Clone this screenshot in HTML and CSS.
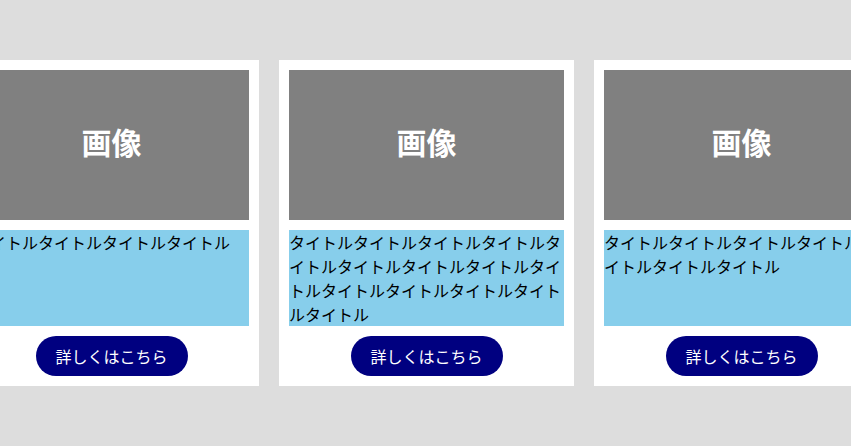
FILE: index.html
```html
<!DOCTYPE html>
<html lang="ja">
<head>
    <meta charset="UTF-8">
    <title>カード一覧</title>
    <link rel="stylesheet" href="styles.css">
</head>
<body>
    <div class="slider">
        <div class="slider-track">
            <div class="card">
                <div class="card-img">画像</div>
                <p class="card-title">タイトルタイトルタイトルタイトル</p>
                <a class="card-btn" href="#">詳しくはこちら</a>
            </div>
            <div class="card">
                <div class="card-img">画像</div>
                <p class="card-title">タイトルタイトルタイトルタイトルタイトルタイトルタイトルタイトルタイトルタイトルタイトルタイトルタイトルタイトル</p>
                <a class="card-btn" href="#">詳しくはこちら</a>
            </div>
            <div class="card">
                <div class="card-img">画像</div>
                <p class="card-title">タイトルタイトルタイトルタイトルタイトルタイトルタイトル</p>
                <a class="card-btn" href="#">詳しくはこちら</a>
            </div>
        </div>
    </div>
</body>
</html>
```

FILE: styles.css
```css
body {
    margin: 0;
    padding: 0;
    background-color: #ddd;
    font-family: "Noto Sans CJK JP", "Noto Sans", sans-serif;
}

.slider {
    height: 100vh;
    display: flex;
    align-items: center;
    overflow: hidden;
}

.slider-track {
    display: flex;
    gap: 20px;
    margin-left: -36px;
}

.card {
    flex: 0 0 295px;
    box-sizing: border-box;
    padding: 10px;
    background-color: #fff;
    display: flex;
    flex-direction: column;
    align-items: center;
}

.card-img {
    width: 100%;
    height: 150px;
    box-sizing: border-box;
    padding-bottom: 8px;
    background-color: #808080;
    color: #fff;
    font-size: 30px;
    font-weight: bold;
    display: flex;
    align-items: center;
    justify-content: center;
}

.card-title {
    width: 100%;
    height: 96px;
    margin: 10px 0;
    background-color: #87ceeb;
    color: #000;
    font-size: 16px;
    line-height: 24px;
    word-break: break-all;
}

.card-btn {
    display: block;
    width: 152px;
    height: 40px;
    line-height: 40px;
    border-radius: 20px;
    background-color: #000080;
    color: #fff;
    font-size: 16px;
    text-align: center;
    text-decoration: none;
}
```
